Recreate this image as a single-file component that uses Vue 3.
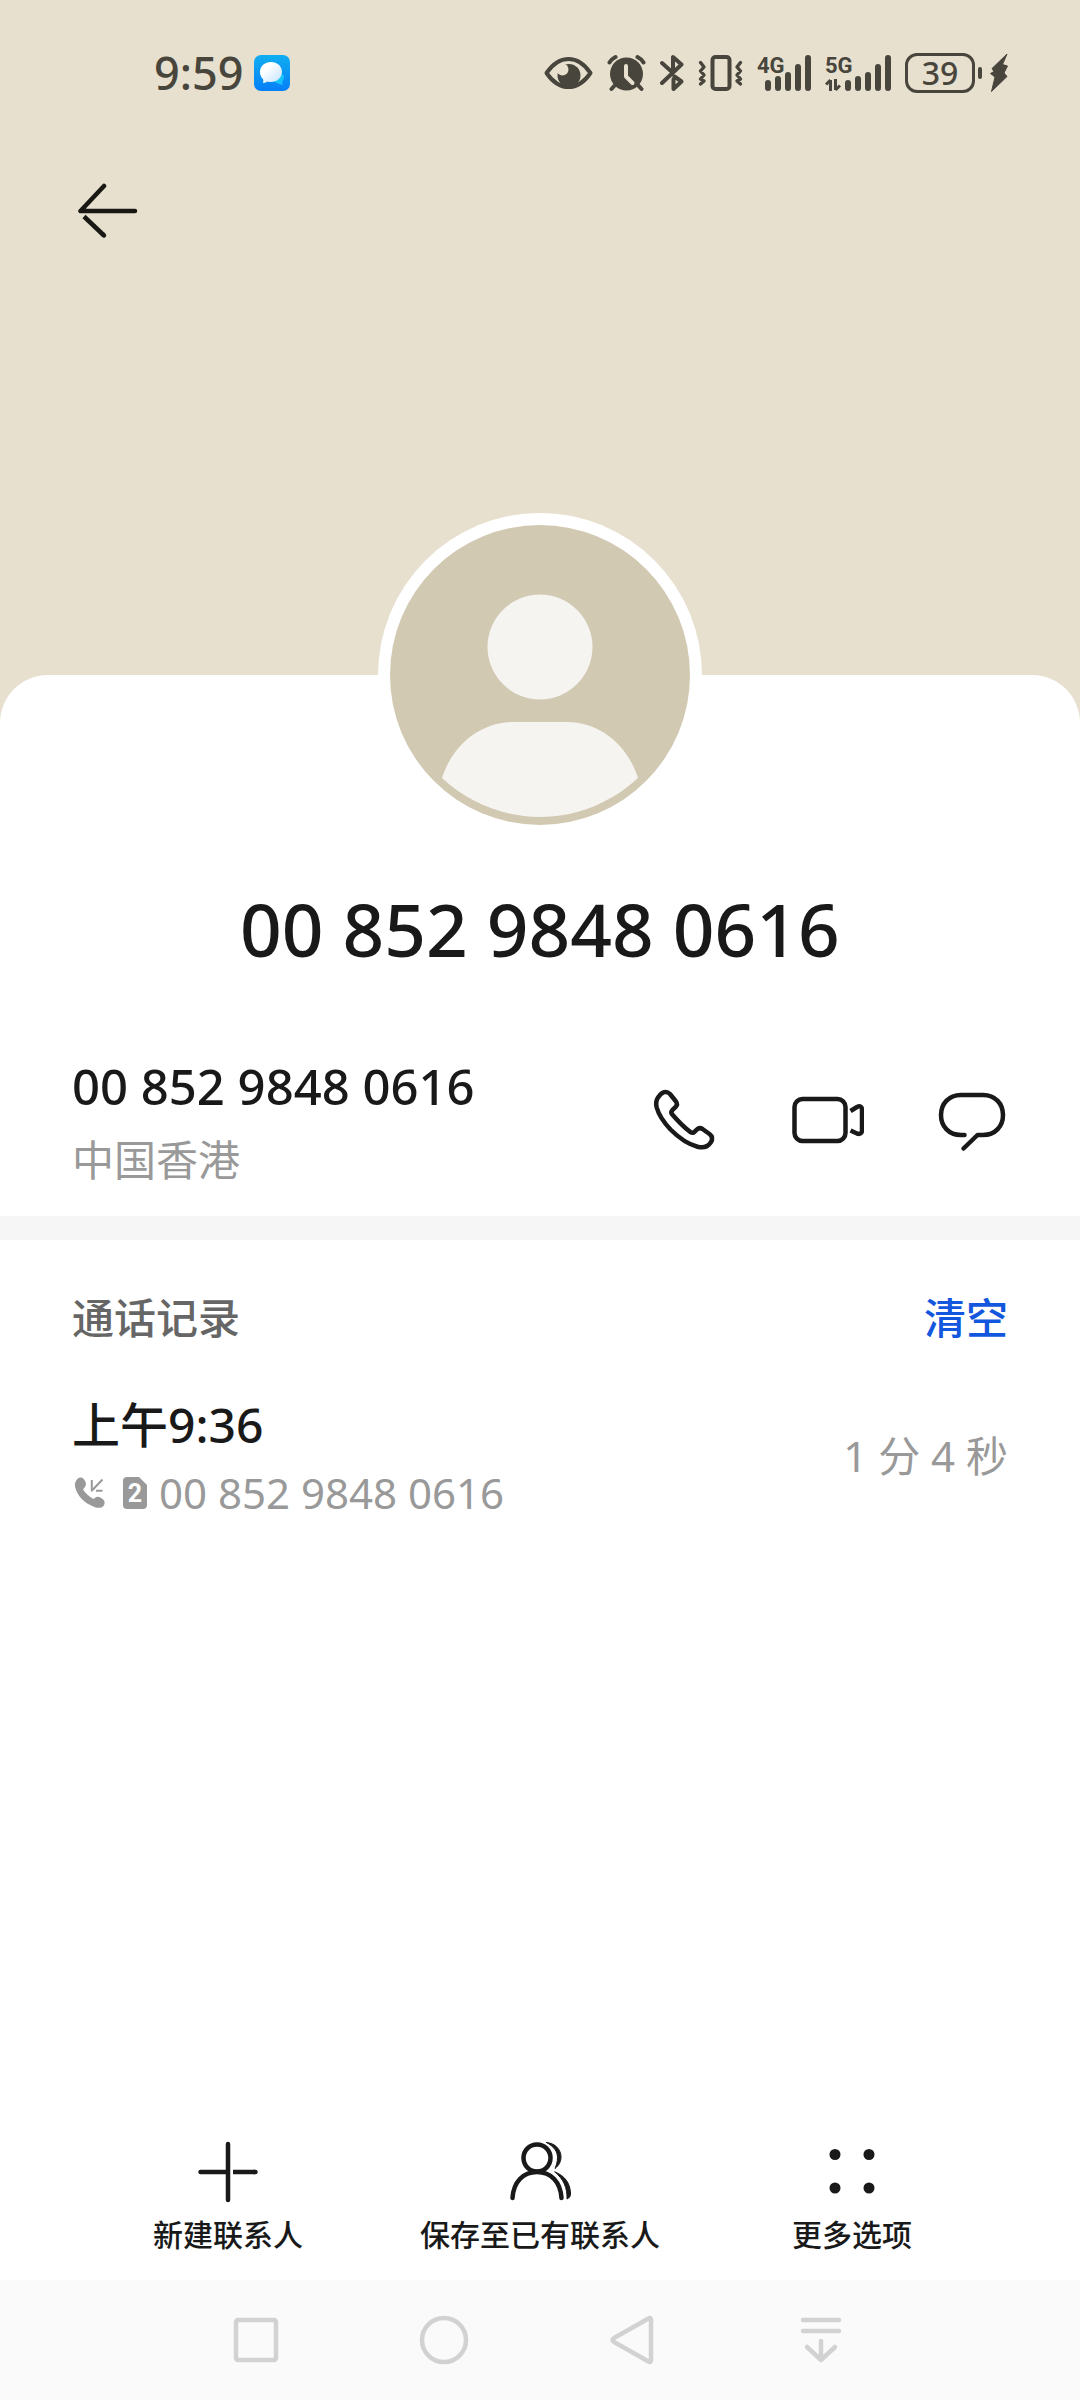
<script setup>
const phoneNumber = '00 852 9848 0616'
const calls = [{ id: 1, time: '上午9:36', number: phoneNumber, sim: '2', duration: '1 分 4 秒' }]
</script>

<template>
  <div class="screen">
    <header class="hero">
      <div class="status">
        <div class="status-left">
          <span class="clock">9:59</span>
          <svg class="app-icon" width="36" height="36" viewBox="0 0 36 36" aria-hidden="true">
            <defs>
              <linearGradient id="appBg" x1="0" y1="0" x2="0" y2="1">
                <stop offset="0" stop-color="#10aef0" />
                <stop offset="1" stop-color="#067ff8" />
              </linearGradient>
              <linearGradient id="appBubble" x1="0" y1="0" x2="1" y2="1">
                <stop offset="0.3" stop-color="#fff" />
                <stop offset="1" stop-color="#bfe3ff" />
              </linearGradient>
            </defs>
            <rect width="36" height="36" rx="7" fill="url(#appBg)" />
            <path d="M20 26c2 2 5 3 9 4-1-2-1-3 0-5 2-2 1-5-1-6z" fill="#14c4fb" />
            <path d="M17 7c6.400 0 11 4.300 11 9.800S23.400 27 17 27c-1.500 0-2.500-.2-3.500-.6-1.300.8-2.800 1.500-4.500 1.700.4-1.300.4-2.500.2-3.700C7 22.500 6 20 6 16.800 6 11.300 10.600 7 17 7z" fill="url(#appBubble)" />
          </svg>
        </div>
        <div class="status-right">
          <svg width="49" height="40" viewBox="0 0 49 40" aria-hidden="true">
            <path d="M2.500 20C9 10.500 17 6 24.500 6S40 10.500 46.500 20C40 29.500 32 34 24.500 34S9 29.500 2.500 20z" fill="none" stroke="#48453c" stroke-width="4" stroke-linejoin="round" />
            <circle cx="25" cy="22.500" r="11.500" fill="#48453c" />
            <circle cx="18.500" cy="16.500" r="6" fill="#e7e0cf" />
          </svg>
          <svg width="39" height="40" viewBox="0 0 39 40" fill="none" stroke="#48453c" stroke-width="4" stroke-linecap="round" aria-hidden="true">
            <circle cx="19.500" cy="21" r="16.500" fill="#48453c" stroke="none" />
            <path d="M2.500 9.500Q4.500 6 8.500 4M36.500 9.500Q34.500 6 30.500 4M9 31l-4.500 5M30 31l4.500 5" />
            <path d="M19 13v10.500l6.500 6.500" stroke="#e7e0cf" stroke-linejoin="round" />
          </svg>
          <svg width="24" height="40" viewBox="0 0 24 40" fill="none" stroke="#48453c" stroke-width="4" stroke-linecap="round" stroke-linejoin="round" aria-hidden="true">
            <path d="M2 10l10 9M2 30L21.500 11.500 13 4v15M13.500 26v10l8-7.500-7-5" />
          </svg>
          <svg width="45" height="40" viewBox="0 0 45 40" fill="none" stroke="#48453c" stroke-linecap="round" stroke-linejoin="round" aria-hidden="true">
            <rect x="14.500" y="4" width="17" height="32" rx="3" stroke-width="4" />
            <path d="M2.500 9.500L6 14l-3.500 4L6 22l-3.500 4L6 28l-3.500 3M42.500 9.500L39 14l3.500 4L39 22l3.500 4L39 28l3.500 3" stroke-width="3.400" />
          </svg>
          <svg width="54" height="40" viewBox="0 0 54 40" aria-label="4G">
            <text x="0" y="20" class="net">4G</text>
            <path d="M11 30v5M21 26v9M31 22v13M41 14v21M51 5v30" class="bars" />
          </svg>
          <svg width="66" height="40" viewBox="0 0 66 40" aria-label="5G">
            <text x="0" y="20" class="net">5G</text>
            <path d="M23 30v5M33 26v9M43 22v13M53 14v21M63 5v30" class="bars" />
            <path d="M5.500 27v11M1 31.500L5.500 27M10.500 26v11M10.500 37l4.500-4.500" fill="none" stroke="#48453c" stroke-width="3" />
          </svg>
          <div class="power">
            <span class="battery">39</span>
            <span class="nub"></span>
            <svg width="18" height="40" viewBox="0 0 18 40" aria-hidden="true">
              <path d="M17 1L2 15.500l2 3-3.500 2 4.500 3.500L1.500 38.500 17 23.500l-3-3.500 3.500-7-5-1.500z" fill="#48453c" stroke="#48453c" stroke-linejoin="round" />
            </svg>
          </div>
        </div>
      </div>
      <button class="back" aria-label="返回">
        <svg width="60" height="60" viewBox="0 0 60 60" fill="none" stroke="#191813" stroke-width="4.500" stroke-linecap="round" stroke-linejoin="round" aria-hidden="true">
          <path d="M26 5L2.500 30H57" />
          <path d="M26 54.500L6 35.500" stroke-linecap="butt" />
          <path d="M25 53.500l1 1" />
        </svg>
      </button>
    </header>

    <main class="panel">
      <svg class="avatar" width="324" height="324" viewBox="0 0 324 324" role="img" aria-label="头像">
        <circle cx="162" cy="162" r="162" fill="#fff" />
        <circle cx="162" cy="162" r="150" fill="#d2c9b3" />
        <circle cx="162" cy="134" r="52.500" fill="#f5f4f0" />
        <path d="M64 265C75 231 103 209 136 209h53c32 0 60 22 71 56-27 25-62 39-98 39s-71-14-98-39z" fill="#f5f4f0" />
      </svg>

      <h1 class="title">{{ phoneNumber }}</h1>

      <section class="contact">
        <div class="contact-text">
          <p class="number">{{ phoneNumber }}</p>
          <p class="region">中国香港</p>
        </div>
        <div class="actions">
          <button aria-label="呼叫">
            <svg class="line" width="72" height="72" viewBox="-1 2 72 72" aria-hidden="true">
              <path d="M9 13.500c4-6 8.500-7 12-3.500l6 7.500c1.400 2 1.300 3.700-.3 5.300l-3.400 3.400c-1.400 1.500-1.300 2.800 0 4.300 6 7 12 13 18.200 17.600 1.500 1 3 .8 4.200-.5l2.300-2.200c1.500-1.500 3.500-1.700 5.500-.4l7 5c3 2.300 3.300 5.300 1.200 8.500-3 4.500-7.500 5.700-13.200 4.200C38 60 30 54 21.500 45.500 14 37.500 9.500 30 7.700 23.500 6.700 19.500 7 16.500 9 13.500z" />
            </svg>
          </button>
          <button aria-label="视频通话">
            <svg class="line" width="72" height="72" viewBox="0 2 72 72" aria-hidden="true">
              <rect x="2.500" y="15" width="51" height="42" rx="8" />
              <path d="M58.500 27l6.500-4c3-1.500 5-.5 5 3v20c0 3.500-2 4.500-5 3.500l-6.500-3" stroke-linecap="butt" />
            </svg>
          </button>
          <button aria-label="信息">
            <svg class="line" width="72" height="72" viewBox="0 2 72 72" aria-hidden="true">
              <path d="M28.500 51H25C12.500 51 5 42 5 31s7.500-20 20-20h22c12.500 0 20 9 20 20s-7.500 20-20 20h-5.500L27.500 64.500" />
            </svg>
          </button>
        </div>
      </section>

      <section class="log">
        <div class="log-head">
          <h2>通话记录</h2>
          <button class="clear">清空</button>
        </div>
        <div v-for="call in calls" :key="call.id" class="entry">
          <div class="entry-text">
            <p class="entry-time">{{ call.time }}</p>
            <p class="entry-meta">
              <svg class="incoming" width="34" height="34" viewBox="0 0 34 34" aria-hidden="true">
                <path d="M2 5c2-4 6-4.500 8-1.500 2.500 3 2.500 6 .5 8l-1.500 2c2.500 4 6 7 10.500 9.500l2-1.500c1.500-1 3.500-1 5.500.5 4 2 4.500 5 2.500 8-2 2-5 2.500-9 1C10 27 3 19.500 1 10.500 .7 8.500 1 6.500 2 5z" fill="#999" />
                <path d="M28.500 3.500L18.500 14M17.800 4v11.500M22 14.800h6.500" fill="none" stroke="#999" stroke-width="2" />
              </svg>
              <svg width="24" height="34" viewBox="0 0 24 34" aria-label="SIM 2">
                <path d="M4 1h12l8 8v20c0 2.500-1.500 4-4 4H4c-2.500 0-4-1.500-4-4V5c0-2.500 1.500-4 4-4z" fill="#999" />
                <text x="12" y="26" class="sim">{{ call.sim }}</text>
              </svg>
              <span>{{ call.number }}</span>
            </p>
          </div>
          <span class="duration">{{ call.duration }}</span>
        </div>
      </section>

      <nav class="toolbar">
        <button>
          <svg class="line" width="72" height="72" viewBox="0 0 72 72" aria-hidden="true">
            <path d="M36 8v56M8.500 36H36" />
            <path d="M41 36h22" stroke-linecap="butt" />
            <path d="M62 36h1.500" />
          </svg>
          <span>新建联系人</span>
        </button>
        <button>
          <svg class="line" width="72" height="72" viewBox="0 0 72 72" aria-hidden="true">
            <circle cx="33" cy="22" r="13.500" />
            <path d="M8.500 62C9.500 46 19 36 33 36s23.500 10 24.500 26" />
            <path d="M42.500 6.500C51 7 57 13.500 57 21c0 4.500-2 8.500-6 11.500 1.500-3.500 2.500-7 2.500-11 0-6-3.500-11-11-15zM51 36c10.500 4 15.500 12 15.500 22 0 2-1 4-3.500 5 .5-11-3.500-20-12-27z" fill="#191919" stroke-width="1" />
          </svg>
          <span>保存至已有联系人</span>
        </button>
        <button>
          <svg width="72" height="72" viewBox="0 0 72 72" fill="#191919" aria-hidden="true">
            <circle cx="19" cy="18.500" r="5.500" /><circle cx="53" cy="18.500" r="5.500" />
            <circle cx="19" cy="52" r="5.500" /><circle cx="53" cy="52" r="5.500" />
          </svg>
          <span>更多选项</span>
        </button>
      </nav>
    </main>

    <footer class="system-nav">
      <button aria-label="最近任务">
        <svg width="50" height="50" viewBox="0 0 50 50" aria-hidden="true"><rect x="5" y="5" width="40" height="40" rx="2" /></svg>
      </button>
      <button aria-label="主屏幕">
        <svg width="50" height="50" viewBox="0 0 50 50" aria-hidden="true"><circle cx="25" cy="25" r="22" /></svg>
      </button>
      <button aria-label="返回上一级">
        <svg width="50" height="50" viewBox="0 0 50 50" aria-hidden="true"><path d="M41.500 3.500Q44 2 44 5v40q0 3-2.500 1.500L7 27q-3-2 0-4z" /></svg>
      </button>
      <button aria-label="下拉通知">
        <svg width="50" height="50" viewBox="0 0 50 50" aria-hidden="true"><path d="M8 5h36M8 16h36M26 26v19M12 32l14 13 14-13" /></svg>
      </button>
    </footer>
  </div>
</template>

<style>
body {
  margin: 0;
  background: #fff;
}
</style>

<style scoped>
.screen {
  display: flex;
  flex-direction: column;
  min-height: 100vh;
  background: #e7e0cf;
  color: #191919;
  font-family: "Noto Sans", "Noto Sans CJK SC", sans-serif;
}
h1, h2, p {
  margin: 0;
}
svg {
  display: block;
  flex: none;
}
button {
  padding: 0;
  border: 0;
  background: none;
  color: inherit;
  font: inherit;
  cursor: pointer;
}
.hero {
  height: 675px;
}
.status {
  display: flex;
  align-items: center;
  justify-content: space-between;
  height: 146px;
  padding: 0 72px 0 154px;
  color: #48453c;
}
.status-left {
  display: flex;
  align-items: center;
  gap: 11px;
}
.clock {
  font-size: 45px;
  font-weight: 500;
  line-height: 60px;
}
.status-right {
  display: flex;
  align-items: center;
  gap: 14px;
}
.net {
  font-family: Roboto, sans-serif;
  font-size: 22px;
  font-weight: 700;
  fill: #48453c;
}
.bars {
  fill: none;
  stroke: #48453c;
  stroke-width: 6;
  stroke-linecap: round;
}
.power {
  display: flex;
  align-items: center;
}
.battery {
  box-sizing: border-box;
  width: 70px;
  height: 40px;
  border: 3px solid #48453c;
  border-radius: 12px;
  font-size: 32px;
  font-weight: 500;
  line-height: 34px;
  text-align: center;
}
.nub {
  width: 4px;
  height: 12px;
  margin: 0 8px 0 3px;
  border-radius: 2px;
  background: #48453c;
}
.back {
  display: block;
  margin: 35px 0 0 78px;
}
.panel {
  position: relative;
  display: flex;
  flex: 1;
  flex-direction: column;
  padding-top: 206px;
  border-radius: 48px 48px 0 0;
  background: #fff;
}
.avatar {
  position: absolute;
  top: -162px;
  left: calc(50% - 162px);
}
.title {
  font-size: 73px;
  font-weight: 500;
  line-height: 96px;
  text-align: center;
}
.contact {
  display: flex;
  align-items: center;
  justify-content: space-between;
  padding: 77px 72px 26px;
  border-bottom: 24px solid #f6f6f6;
}
.number {
  font-size: 49px;
  font-weight: 500;
  line-height: 64px;
}
.region {
  margin-top: 12px;
  color: #999;
  font-size: 42px;
  line-height: 60px;
}
.actions {
  display: flex;
  gap: 72px;
}
.line {
  fill: none;
  stroke: #191919;
  stroke-width: 4.5;
  stroke-linecap: round;
  stroke-linejoin: round;
}
.log {
  padding: 48px 72px 0;
}
.log-head {
  display: flex;
  justify-content: space-between;
}
.log-head h2 {
  color: #666;
  font-size: 42px;
  font-weight: 500;
  line-height: 60px;
}
.clear {
  color: #1257de;
  font-size: 42px;
  font-weight: 500;
  line-height: 60px;
}
.entry {
  display: flex;
  align-items: center;
  justify-content: space-between;
  margin-top: 45px;
}
.entry-time {
  font-size: 48px;
  font-weight: 500;
  line-height: 64px;
}
.entry-meta {
  display: flex;
  align-items: center;
  gap: 12px;
  margin-top: 10px;
  color: #999;
  font-size: 42px;
  line-height: 52px;
}
.incoming {
  margin: 0 3px 0 2px;
}
.sim {
  fill: #fff;
  font-family: Roboto, sans-serif;
  font-size: 25px;
  font-weight: 700;
  text-anchor: middle;
}
.duration {
  color: #999;
  font-size: 42px;
  line-height: 60px;
}
.toolbar {
  display: flex;
  margin-top: auto;
  padding: 0 72px 25px;
}
.toolbar button {
  display: flex;
  flex: 1;
  flex-direction: column;
  align-items: center;
  gap: 7px;
  font-size: 30px;
  font-weight: 500;
  line-height: 40px;
  white-space: nowrap;
}
.system-nav {
  display: flex;
  height: 120px;
  padding: 0 166px 0 162px;
  background: #fafafa;
}
.system-nav button {
  display: flex;
  flex: 1;
  align-items: center;
  justify-content: center;
}
.system-nav svg {
  fill: none;
  stroke: #d2d2d2;
  stroke-width: 4.5;
  stroke-linecap: round;
  stroke-linejoin: round;
}
</style>
